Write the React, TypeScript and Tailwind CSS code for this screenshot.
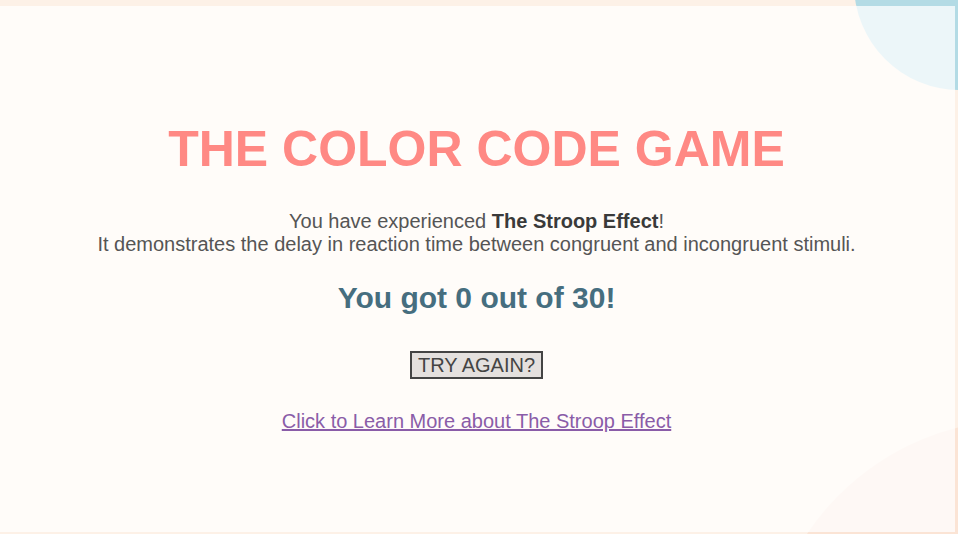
export default function App() {
  return (
    <div className="relative h-[534px] w-full overflow-hidden bg-[#fdf1e7] font-['Liberation_Sans',Arial,sans-serif]">
      {/* decorative blobs behind the frosted card */}
      <div className="absolute left-[854px] top-[-122px] h-[212px] w-[212px] rounded-full bg-[#b3dbe5]" />
      <div className="absolute left-[764px] top-[420px] h-[512px] w-[512px] rounded-full bg-[#fbe4d5]" />

      <main className="relative mt-[6px] mr-[3px] flex h-[526px] flex-col items-center bg-white/75 pt-[118px] pr-[2px] text-center">
        <h1 className="text-[50px] font-bold leading-[50px] text-[#ff8984]">THE COLOR CODE GAME</h1>

        <p className="mt-[36px] text-[20px] leading-[23px] text-[#555]">
          You have experienced <b className="text-[#3a3a3a]">The Stroop Effect</b>!
          <br />
          It demonstrates the delay in reaction time between congruent and incongruent stimuli.
        </p>

        <h2 className="mt-[27px] text-[30px] font-bold leading-[30px] text-[#466e7f]">You got 0 out of 30!</h2>

        <button className="mt-[38px] border-2 border-[#444] bg-[#e4e0de] px-[6px] py-px text-[20px] leading-[22px] text-[#444]">
          TRY AGAIN?
        </button>

        <a href="#" className="mt-[30px] text-[20px] leading-[24px] text-[#8a5ca8] underline">
          Click to Learn More about The Stroop Effect
        </a>
      </main>
    </div>
  );
}
